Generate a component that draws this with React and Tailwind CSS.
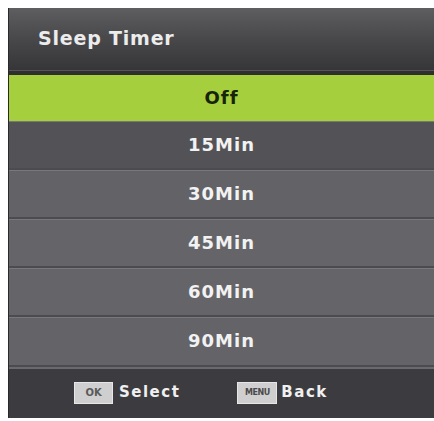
import React from "react";

const rows = ["15Min", "30Min", "45Min", "60Min", "90Min"];
const rowBg = ["bg-[#525257]", "bg-[#626267]", "bg-[#656569]", "bg-[#656569]", "bg-[#646468]"];

export default function App() {
  const font = { fontFamily: '"DejaVu Sans", sans-serif' };
  return (
    <div className="w-[434px] h-[421px] bg-white pt-[8px] pl-[8px]" style={font}>
      <div className="w-[426px] h-[410px] flex flex-col bg-[#3a3a3d] border-l border-[#2a2a2a]">
        <div className="h-[62px] flex items-center pl-[29px] bg-gradient-to-b from-[#5e5e60] via-[#48484b] to-[#363639]">
          <span className="text-[19px] font-bold text-[#ececec] tracking-[0.8px] leading-none mb-[2px]">
            Sleep Timer
          </span>
        </div>
        <div className="h-[5px] bg-[#2f2f32] border-t border-[#555558]" />
        <div className="h-[46px] flex items-center justify-center bg-[#a6cf3e]">
          <span className="text-[18px] font-bold text-[#16240a] tracking-[1px] leading-none">Off</span>
        </div>
        {rows.map((r, i) => (
          <div
            key={r}
            className={`${i === 4 ? "h-[50px]" : "h-[49px]"} flex items-center justify-center ${rowBg[i]} border-b-2 border-[#4c4c50] shadow-[inset_0_1px_0_#78787c]`}
          >
            <span className="text-[18px] font-bold text-[#f2f2f2] tracking-[1px] leading-none">{r}</span>
          </div>
        ))}
        <div className="flex-1 flex items-center pl-[65px] bg-[#3c3c40] shadow-[inset_0_2px_0_#6a6a6e]">
          <span className="w-[39px] h-[22px] flex items-center justify-center bg-[#cfcfcf] border border-[#e6e6e6] text-[10px] font-bold text-[#5a5a5a] leading-none">
            OK
          </span>
          <span className="ml-[6px] text-[15px] font-bold text-[#f0f0f0] tracking-[1.5px] leading-none">Select</span>
          <span className="ml-[57px] w-[40px] h-[22px] flex items-center justify-center bg-[#cfcfcf] border border-[#e6e6e6] text-[8px] font-bold text-[#4a4a4a] leading-none tracking-[-0.5px]">
            MENU
          </span>
          <span className="ml-[4px] text-[15px] font-bold text-[#f0f0f0] tracking-[1.5px] leading-none">Back</span>
        </div>
      </div>
    </div>
  );
}
